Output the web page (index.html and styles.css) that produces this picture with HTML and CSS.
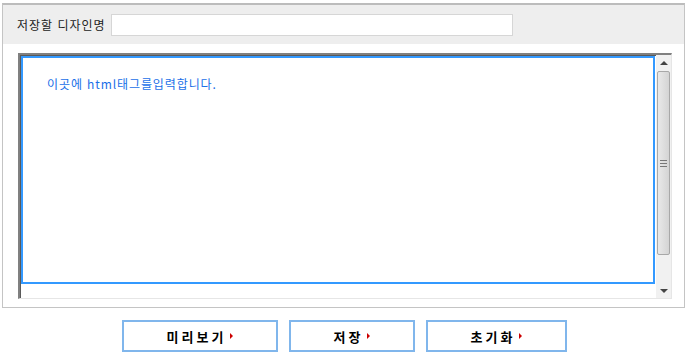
FILE: index.html
```html
<!DOCTYPE html>
<html lang="ko">
<head>
    <meta charset="UTF-8">
    <title>디자인 편집</title>
    <link rel="stylesheet" href="styles.css">
</head>
<body>
	<div id='wrap'>
		<div class='head'>
			<label for='dname'>저장할 디자인명</label>
			<input type='text' id='dname' class='name-input'>
		</div>
		<div class='body'>
			<div class='frame'>
				<div class='edit-area'>
					<div class='editor'>이곳에 html태그를입력합니다.</div>
				</div>
				<div class='scrollbar'>
					<div class='sb-btn'><span class='tri-up'></span></div>
					<div class='sb-track'>
						<div class='sb-thumb'><span class='grip'></span></div>
					</div>
					<div class='sb-btn'><span class='tri-down'></span></div>
				</div>
			</div>
		</div>
	</div>
	<div class='btns'>
		<a href="javascript:;" class='btn btn-preview'>미리보기<i class='arr'></i></a>
		<a href="javascript:;" class='btn btn-save'>저장<i class='arr'></i></a>
		<a href="javascript:;" class='btn btn-reset'>초기화<i class='arr'></i></a>
	</div>
</body>
</html>
```

FILE: styles.css
```css
* {
	margin: 0;
	padding: 0;
	box-sizing: border-box;
}
body {
	font-family: "Noto Sans CJK KR", "Liberation Sans", sans-serif;
	font-size: 12px;
	color: #333;
	background: #fff;
}
#wrap {
	width: 683px;
	margin: 3px 0 0 2px;
	border: 1px solid #c4c4c4;
	border-top: 2px solid #bcbcbc;
}
.head {
	height: 39px;
	background-color: #eeeeee;
	display: flex;
	align-items: center;
	padding-left: 14px;
}
.head label {
	margin-right: 5px;
	line-height: 14px;
	letter-spacing: 1px;
	color: #222;
}
.name-input {
	width: 402px;
	height: 22px;
	border: 1px solid #d6d6d6;
	background: #fff;
	outline: none;
}
.body {
	padding: 9px 12px 8px 15px;
}
.frame {
	width: 654px;
	height: 246px;
	display: flex;
	border-style: solid;
	border-width: 2px 1px 1px 2px;
	border-color: #808080 #e6e6e6 #e6e6e6 #808080;
	box-shadow: inset 1px 1px 0 #5a5a5a;
}
.edit-area {
	flex: 1;
	padding: 1px 1px 14px 1px;
}
.editor {
	height: 100%;
	border: 2px solid #3399ff;
	padding: 17px 0 0 24px;
	color: #1a6fe8;
	letter-spacing: 0.9px;
}
.scrollbar {
	width: 15px;
	display: flex;
	flex-direction: column;
	background: #f1f1f1;
}
.sb-btn {
	height: 15px;
	display: flex;
	align-items: center;
	justify-content: center;
}
.tri-up, .tri-down {
	width: 0;
	height: 0;
	border-left: 4px solid transparent;
	border-right: 4px solid transparent;
}
.tri-up {
	border-bottom: 4px solid #444;
}
.tri-down {
	border-top: 4px solid #444;
}
.sb-track {
	flex: 1;
	padding: 1px 1px 28px 1px;
}
.sb-thumb {
	height: 100%;
	border: 1px solid #a8a8a8;
	border-radius: 2px;
	background: linear-gradient(to right, #e9e9e9, #d4d4d4);
	display: flex;
	align-items: center;
	justify-content: center;
}
.grip {
	width: 7px;
	height: 7px;
	border-top: 1px solid #777;
	border-bottom: 1px solid #777;
	position: relative;
}
.grip:after {
	content: '';
	position: absolute;
	left: 0;
	right: 0;
	top: 2px;
	border-top: 1px solid #777;
}
.btns {
	display: flex;
	justify-content: center;
	gap: 11px;
	margin-top: 12px;
}
.btn {
	height: 32px;
	border: 2px solid #80b6ec;
	display: flex;
	align-items: center;
	justify-content: center;
	color: #000;
	font-weight: bold;
	font-size: 13px;
	letter-spacing: 3px;
	text-decoration: none;
}
.btn-preview {
	width: 156px;
}
.btn-save {
	width: 126px;
}
.btn-reset {
	width: 141px;
}
.arr {
	display: inline-block;
	width: 0;
	height: 0;
	margin-left: 4px;
	border-top: 3px solid transparent;
	border-bottom: 3px solid transparent;
	border-left: 3px solid #cc0000;
}
```
